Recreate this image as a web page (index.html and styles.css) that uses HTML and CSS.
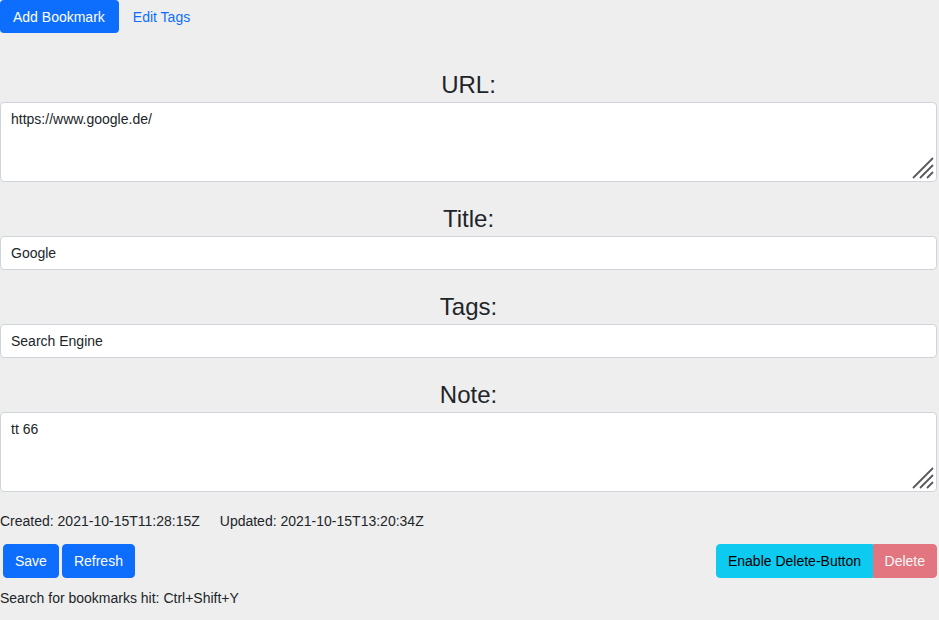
FILE: index.html
```html
<!DOCTYPE html>
<html>
<head>
<meta charset="utf-8">
<link rel="stylesheet" href="styles.css">
</head>
<body>
<div class="page">
  <nav class="nav">
    <a class="nav-link active">Add Bookmark</a>
    <a class="nav-link">Edit Tags</a>
  </nav>
  <form class="form">
    <div class="group first">
      <label class="label">URL:</label>
      <div class="area-wrap">
        <textarea class="control area">https://www.google.de/</textarea>
        <svg class="grip" width="22" height="22" viewBox="0 0 22 22"><path d="M21 1L1 21M21 8L8 21M21 15L15 21" stroke="#5a5a5a" stroke-width="1.8" fill="none"/></svg>
      </div>
    </div>
    <div class="group">
      <label class="label">Title:</label>
      <input class="control" value="Google">
    </div>
    <div class="group">
      <label class="label">Tags:</label>
      <input class="control" value="Search Engine">
    </div>
    <div class="group">
      <label class="label">Note:</label>
      <div class="area-wrap">
        <textarea class="control area">tt 66</textarea>
        <svg class="grip" width="22" height="22" viewBox="0 0 22 22"><path d="M21 1L1 21M21 8L8 21M21 15L15 21" stroke="#5a5a5a" stroke-width="1.8" fill="none"/></svg>
      </div>
    </div>
  </form>
  <div class="dates"><span>Created: 2021-10-15T11:28:15Z</span><span>Updated: 2021-10-15T13:20:34Z</span></div>
  <div class="actions">
    <div class="left">
      <button class="btn primary">Save</button>
      <button class="btn primary">Refresh</button>
    </div>
    <div class="btn-group">
      <button class="btn info">Enable Delete-Button</button>
      <button class="btn danger" disabled>Delete</button>
    </div>
  </div>
  <div class="hint">Search for bookmarks hit: Ctrl+Shift+Y</div>
</div>
</body>
</html>
```

FILE: styles.css
```css
html, body {
  margin: 0;
  padding: 0;
  background: #eeeeee;
}
body {
  font-family: "Liberation Sans", Arial, sans-serif;
  font-size: 14px;
  line-height: 20px;
  color: #212529;
}
.page {
  width: 937px;
}
.nav {
  display: flex;
  height: 33px;
}
.nav-link {
  display: flex;
  align-items: center;
  padding: 0 13px 0 14px;
  color: #0d6efd;
  border-radius: 4px;
  cursor: pointer;
}
.nav-link.active {
  background: #0d6efd;
  color: #fff;
  padding: 0 14px 0 13px;
}
.form {
  margin: 0;
}
.group {
  display: flex;
  flex-direction: column;
  margin-top: 22px;
}
.group.first {
  margin-top: 37px;
}
.label {
  display: block;
  text-align: center;
  font-size: 24px;
  line-height: 29px;
  margin-bottom: 3px;
}
.control {
  box-sizing: border-box;
  width: 937px;
  height: 34px;
  margin: 0;
  padding: 6px 10px;
  font-family: "Liberation Sans", Arial, sans-serif;
  font-size: 14px;
  line-height: 20px;
  color: #212529;
  background: #fff;
  border: 1px solid #ced4da;
  border-radius: 4px;
  outline: none;
}
.area-wrap {
  position: relative;
  height: 80px;
}
.area {
  height: 80px;
  resize: none;
  display: block;
}
.grip {
  position: absolute;
  right: 3px;
  bottom: 3px;
  pointer-events: none;
}
.dates {
  margin-top: 19px;
  display: flex;
  gap: 20px;
}
.actions {
  margin-top: 13px;
  display: flex;
  justify-content: space-between;
  align-items: center;
}
.left {
  display: flex;
  gap: 3px;
  margin-left: 3px;
}
.btn {
  font-family: "Liberation Sans", Arial, sans-serif;
  font-size: 14px;
  line-height: 20px;
  height: 34px;
  padding: 6px 11px;
  border: 1px solid transparent;
  border-radius: 4px;
  margin: 0;
  cursor: pointer;
}
.primary {
  background: #0d6efd;
  border-color: #0d6efd;
  color: #fff;
}
.btn-group {
  display: flex;
}
.info {
  background: #0dcaf0;
  border-color: #0dcaf0;
  color: #000;
  padding: 6px 10.5px;
  border-top-right-radius: 0;
  border-bottom-right-radius: 0;
}
.danger {
  background: #dc3545;
  border-color: #dc3545;
  color: #fff;
  opacity: 0.65;
  padding: 6px 11px;
  border-top-left-radius: 0;
  border-bottom-left-radius: 0;
}
.hint {
  margin-top: 10px;
}
```
